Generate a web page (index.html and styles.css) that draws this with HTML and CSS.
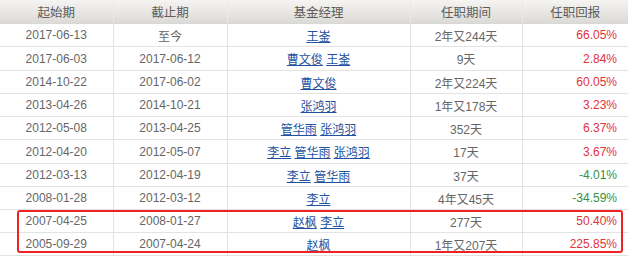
FILE: index.html
```
<!DOCTYPE html>
<html>
<head>
<meta charset="utf-8">
<link rel="stylesheet" href="styles.css">
</head>
<body>
<div class="wrap">
<table class="grid">
<colgroup><col class="c1"><col class="c2"><col class="c3"><col class="c4"><col class="c5"></colgroup>
<thead>
<tr><th>起始期</th><th>截止期</th><th>基金经理</th><th>任职期间</th><th>任职回报</th></tr>
</thead>
<tbody>
<tr><td>2017-06-13</td><td>至今</td><td><a href="#">王崟</a></td><td>2年又244天</td><td class="num up">66.05%</td></tr>
<tr class="tall"><td>2017-06-03</td><td>2017-06-12</td><td><a href="#">曹文俊</a> <a href="#">王崟</a></td><td>9天</td><td class="num up">2.84%</td></tr>
<tr><td>2014-10-22</td><td>2017-06-02</td><td><a href="#">曹文俊</a></td><td>2年又224天</td><td class="num up">60.05%</td></tr>
<tr><td>2013-04-26</td><td>2014-10-21</td><td><a href="#">张鸿羽</a></td><td>1年又178天</td><td class="num up">3.23%</td></tr>
<tr><td>2012-05-08</td><td>2013-04-25</td><td><a href="#">管华雨</a> <a href="#">张鸿羽</a></td><td>352天</td><td class="num up">6.37%</td></tr>
<tr class="tall"><td>2012-04-20</td><td>2012-05-07</td><td><a href="#">李立</a> <a href="#">管华雨</a> <a href="#">张鸿羽</a></td><td>17天</td><td class="num up">3.67%</td></tr>
<tr><td>2012-03-13</td><td>2012-04-19</td><td><a href="#">李立</a> <a href="#">管华雨</a></td><td>37天</td><td class="num down">-4.01%</td></tr>
<tr><td>2008-01-28</td><td>2012-03-12</td><td><a href="#">李立</a></td><td>4年又45天</td><td class="num down">-34.59%</td></tr>
<tr><td>2007-04-25</td><td>2008-01-27</td><td><a href="#">赵枫</a> <a href="#">李立</a></td><td>277天</td><td class="num up">50.40%</td></tr>
<tr><td>2005-09-29</td><td>2007-04-24</td><td><a href="#">赵枫</a></td><td>1年又207天</td><td class="num up">225.85%</td></tr>
</tbody>
</table>
<div class="highlight"></div>
</div>
</body>
</html>
```
FILE: styles.css
```
html, body {
  margin: 0;
  padding: 0;
  background: #fff;
}
.wrap {
  position: relative;
  width: 628px;
  height: 256px;
  overflow: hidden;
}
.grid {
  width: 628px;
  border-collapse: collapse;
  table-layout: fixed;
  font-family: "Liberation Sans", Arial, "Noto Sans CJK SC", sans-serif;
  font-size: 12px;
  color: #666;
}
.c1 { width: 113px; }
.c2 { width: 114px; }
.c3 { width: 183px; }
.c4 { width: 112px; }
.c5 { width: 106px; }
.grid th {
  height: 23px;
  padding: 0;
  font-weight: normal;
  color: #5c5c5c;
  font-size: 12.5px;
  background: linear-gradient(#f5f4f2, #dcdad6);
  border-left: 1px solid #ebeae7;
  border-right: 1px solid #ebeae7;
  border-bottom: 1px solid #d8d8d8;
  text-align: center;
}
.grid th:first-child { border-left: none; }
.grid th:last-child { border-right: none; }
.grid td {
  height: 22px;
  padding: 0;
  text-align: center;
  border: 1px solid #e3e3e3;
  white-space: nowrap;
}
.grid tr.tall td { height: 23px; }
.grid td:first-child { border-left: none; }
.grid td:last-child { border-right: none; }
.grid td.num {
  text-align: right;
  padding-right: 11px;
}
.up { color: #e2323c; }
.grid td.down { color: #36903f; }
.grid a {
  color: #2251a0;
  text-decoration: underline;
}
.highlight {
  position: absolute;
  left: 17px;
  top: 210px;
  width: 602px;
  height: 39px;
  border: 2px solid #ee2222;
  border-radius: 3px;
}
```
